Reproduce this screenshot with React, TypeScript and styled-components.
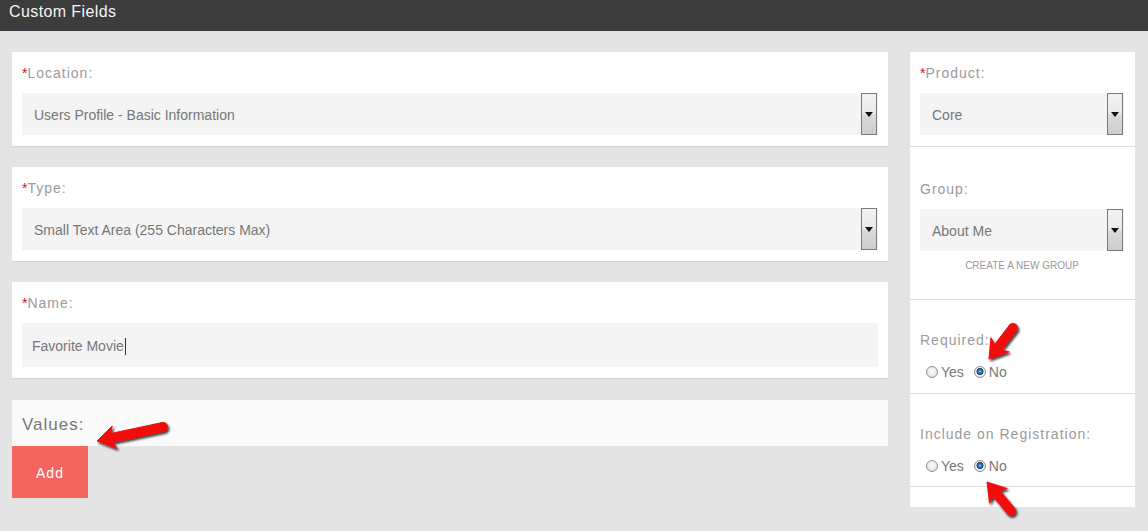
import React from 'react';
import styled, { createGlobalStyle } from 'styled-components';

const GlobalStyle = createGlobalStyle`
  html, body {
    margin: 0;
    padding: 0;
    background: #e4e4e4;
    font-family: "Liberation Sans", Arial, sans-serif;
  }
`;

interface ArrowProps {
  from: [number, number];
  to: [number, number];
}

function Arrow({ from, to }: ArrowProps) {
  const [x1, y1] = from;
  const [x2, y2] = to;
  const dx = x2 - x1;
  const dy = y2 - y1;
  const len = Math.hypot(dx, dy);
  const ux = dx / len;
  const uy = dy / len;
  const nx = -uy;
  const ny = ux;
  const w = 4.5;
  const hw = 11.5;
  const hl = 17;
  const bx = x2 - ux * hl;
  const by = y2 - uy * hl;
  const wx = x2 - ux * (hl + 1);
  const wy = y2 - uy * (hl + 1);
  const pts = [
    [x1 + nx * w, y1 + ny * w],
    [bx + 2 * ux + nx * w, by + 2 * uy + ny * w],
    [wx + nx * hw, wy + ny * hw],
    [x2, y2],
    [wx - nx * hw, wy - ny * hw],
    [bx + 2 * ux - nx * w, by + 2 * uy - ny * w],
    [x1 - nx * w, y1 - ny * w],
  ]
    .map(p => p.map(v => v.toFixed(1)).join(','))
    .join(' ');

  return (
    <g filter="url(#arrowShadow)">
      <polygon points={pts} fill="#f20d0d" strokeLinejoin="round" stroke="#f20d0d" strokeWidth={1} />
      <circle cx={x1} cy={y1} r={w + 0.5} fill="#f20d0d" />
    </g>
  );
}

function SelectField({ value }: { value: string }) {
  return (
    <SelectBox>
      <SelectText>{value}</SelectText>
      <SelectButton>
        <svg width="8" height="5" viewBox="0 0 8 5">
          <path d="M0 0 L8 0 L4 5 Z" fill="#111" />
        </svg>
      </SelectButton>
    </SelectBox>
  );
}

function RadioGroup({ checked }: { checked: 'yes' | 'no' }) {
  return (
    <RadioRow>
      <RadioItem>
        <Radio $checked={checked === 'yes'} />
        Yes
      </RadioItem>
      <RadioItem>
        <Radio $checked={checked === 'no'} />
        No
      </RadioItem>
    </RadioRow>
  );
}

export default function App() {
  return (
    <Page>
      <GlobalStyle />
      <Header>Custom Fields</Header>
      <Main>
        <LeftColumn>
          <Card>
            <Label>
              <Req>*</Req>Location:
            </Label>
            <SelectField value="Users Profile - Basic Information" />
          </Card>
          <Card>
            <Label>
              <Req>*</Req>Type:
            </Label>
            <SelectField value="Small Text Area (255 Characters Max)" />
          </Card>
          <Card>
            <Label>
              <Req>*</Req>Name:
            </Label>
            <TextInput>
              Favorite Movie<Caret />
            </TextInput>
          </Card>
          <ValuesGroup>
            <ValuesBar>Values:</ValuesBar>
            <AddButton>Add</AddButton>
          </ValuesGroup>
        </LeftColumn>

        <RightColumn>
          <Section $pt={13} $pb={11}>
            <Label>
              <Req>*</Req>Product:
            </Label>
            <SelectField value="Core" />
          </Section>
          <Section $pt={34} $pb={27}>
            <Label>Group:</Label>
            <SelectField value="About Me" />
            <CreateLink>CREATE A NEW GROUP</CreateLink>
          </Section>
          <Section $pt={32} $pb={13}>
            <Label>Required:</Label>
            <RadioGroup checked="no" />
          </Section>
          <Section $pt={32} $pb={12}>
            <Label>Include on Registration:</Label>
            <RadioGroup checked="no" />
          </Section>
          <ColumnFoot />
        </RightColumn>
      </Main>

      <Overlay width="1148" height="531" viewBox="0 0 1148 531">
        <defs>
          <filter id="arrowShadow" x="-20%" y="-20%" width="140%" height="140%">
            <feDropShadow dx="1.5" dy="2" stdDeviation="1.3" floodColor="#000" floodOpacity="0.75" />
          </filter>
        </defs>
        <Arrow from={[163, 427]} to={[97, 441]} />
        <Arrow from={[1013, 328]} to={[989, 359]} />
        <Arrow from={[1011, 511]} to={[987, 482]} />
      </Overlay>
    </Page>
  );
}

const Page = styled.div`
  position: relative;
  min-height: 531px;
  background: #e4e4e4;
`;

const Header = styled.header`
  box-sizing: border-box;
  height: 31px;
  padding: 3px 0 0 9px;
  background: #3c3c3c;
  color: #f4f4f4;
  font-size: 16px;
  line-height: 18px;
  letter-spacing: 0.4px;
`;

const Main = styled.main`
  display: flex;
  align-items: flex-start;
  gap: 22px;
  padding: 21px 13px 0 12px;
`;

const LeftColumn = styled.div`
  flex: 1;
  display: flex;
  flex-direction: column;
  gap: 21px;
`;

const Card = styled.section`
  background: #fff;
  padding: 13px 10px 11px;
  box-shadow: 0 1px 1px rgba(0, 0, 0, 0.07);
`;

const Label = styled.div`
  font-size: 14px;
  line-height: 17px;
  letter-spacing: 1px;
  color: #9a9a9a;
  margin-bottom: 11px;
`;

const Req = styled.span`
  color: #c8102e;
  letter-spacing: 0;
`;

const SelectBox = styled.div`
  display: flex;
  align-items: stretch;
  height: 42px;
  background: #f4f4f4;
`;

const SelectText = styled.div`
  flex: 1;
  display: flex;
  align-items: center;
  padding: 2px 0 0 12px;
  font-size: 14px;
  color: #777;
`;

const SelectButton = styled.div`
  box-sizing: border-box;
  width: 16px;
  margin-right: 1px;
  display: flex;
  align-items: center;
  justify-content: center;
  border: 1px solid #7a7a7a;
  background: linear-gradient(#f3f3f3 0%, #e9e9e9 48%, #dadada 52%, #cdcdcd 100%);
`;

const TextInput = styled.div`
  height: 44px;
  display: flex;
  align-items: center;
  padding: 2px 0 0 10px;
  box-sizing: border-box;
  background: #f4f4f4;
  font-size: 14px;
  color: #777;
`;

const Caret = styled.span`
  display: inline-block;
  width: 1px;
  height: 17px;
  background: #333;
  margin-left: 1px;
`;

const ValuesGroup = styled.div`
  display: flex;
  flex-direction: column;
  align-items: flex-start;
  margin-top: 1px;
`;

const ValuesBar = styled.div`
  align-self: stretch;
  box-sizing: border-box;
  height: 46px;
  display: flex;
  align-items: center;
  padding: 3px 0 0 10px;
  background: #fafafa;
  font-size: 17px;
  letter-spacing: 1px;
  color: #777;
`;

const AddButton = styled.button`
  width: 76px;
  height: 52px;
  border: none;
  padding: 1px 0 0;
  background: #f4655f;
  color: #fff;
  font-family: "Liberation Sans", Arial, sans-serif;
  font-size: 14px;
  letter-spacing: 1px;
  cursor: pointer;
`;

const RightColumn = styled.aside`
  width: 225px;
  background: #fff;
  display: flex;
  flex-direction: column;
`;

const Section = styled.section<{ $pt: number; $pb: number }>`
  padding: ${({ $pt }) => $pt}px 11px ${({ $pb }) => $pb}px 10px;
  border-bottom: 1px solid #dedede;
`;

const CreateLink = styled.div`
  margin-top: 9px;
  text-align: center;
  font-size: 10px;
  line-height: 12px;
  color: #999;
`;

const RadioRow = styled.div`
  display: flex;
  align-items: center;
  gap: 10px;
  margin-top: 15px;
  padding-left: 6px;
  height: 16px;
`;

const RadioItem = styled.label`
  display: flex;
  align-items: center;
  gap: 3px;
  font-size: 14px;
  color: #777;
`;

const Radio = styled.span<{ $checked: boolean }>`
  box-sizing: border-box;
  width: 12px;
  height: 12px;
  border-radius: 50%;
  border: 1px solid #8f8f8f;
  background: ${({ $checked }) =>
    $checked
      ? 'radial-gradient(circle at 50% 45%, #6fb6e6 0, #2a73b0 2px, #123f66 3.2px, #f4f4f4 3.8px, #dcdcdc 100%)'
      : 'radial-gradient(circle at 50% 40%, #fdfdfd 0, #e8e8e8 60%, #d0d0d0 100%)'};
`;

const ColumnFoot = styled.div`
  height: 20px;
`;

const Overlay = styled.svg`
  position: absolute;
  left: 0;
  top: 0;
  pointer-events: none;
  overflow: visible;
`;
